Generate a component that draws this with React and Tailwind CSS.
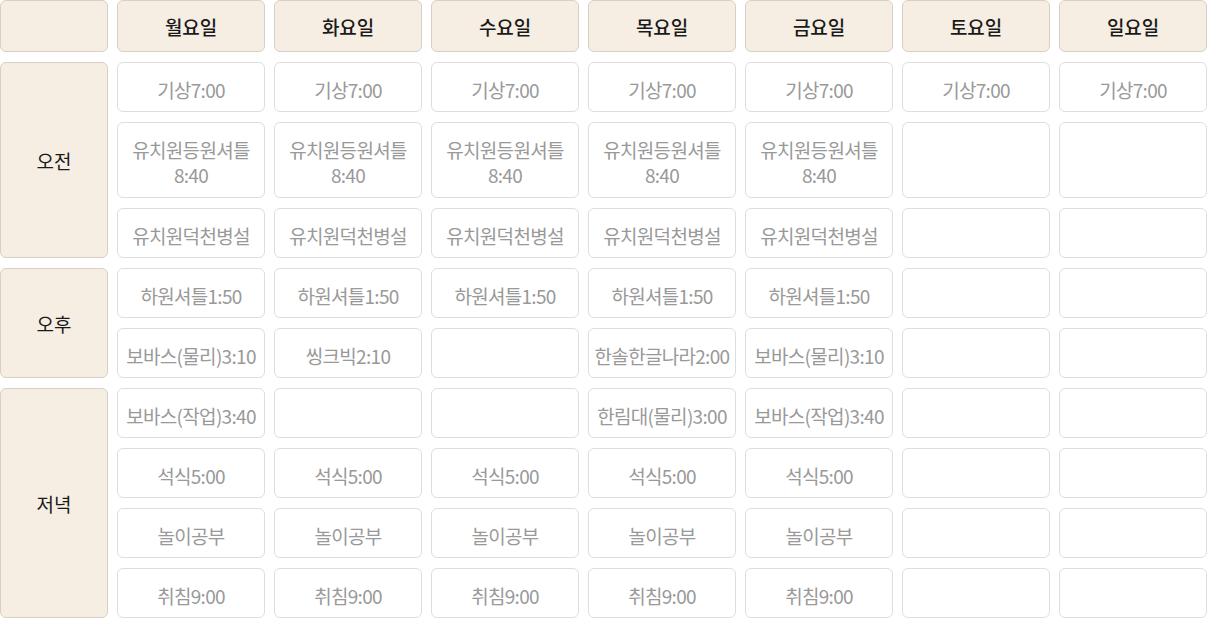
import React from "react";

const days = ["월요일", "화요일", "수요일", "목요일", "금요일", "토요일", "일요일"];

// each row: 7 entries, one per day ("" = empty box)
const rows = [
  ["기상7:00", "기상7:00", "기상7:00", "기상7:00", "기상7:00", "기상7:00", "기상7:00"],
  [
    "유치원등원셔틀\n8:40",
    "유치원등원셔틀\n8:40",
    "유치원등원셔틀\n8:40",
    "유치원등원셔틀\n8:40",
    "유치원등원셔틀\n8:40",
    "",
    "",
  ],
  ["유치원덕천병설", "유치원덕천병설", "유치원덕천병설", "유치원덕천병설", "유치원덕천병설", "", ""],
  ["하원셔틀1:50", "하원셔틀1:50", "하원셔틀1:50", "하원셔틀1:50", "하원셔틀1:50", "", ""],
  ["보바스(물리)3:10", "씽크빅2:10", "", "한솔한글나라2:00", "보바스(물리)3:10", "", ""],
  ["보바스(작업)3:40", "", "", "한림대(물리)3:00", "보바스(작업)3:40", "", ""],
  ["석식5:00", "석식5:00", "석식5:00", "석식5:00", "석식5:00", "", ""],
  ["놀이공부", "놀이공부", "놀이공부", "놀이공부", "놀이공부", "", ""],
  ["취침9:00", "취침9:00", "취침9:00", "취침9:00", "취침9:00", "", ""],
];

const periods = [
  { label: "오전", row: "row-start-2 row-end-5" },
  { label: "오후", row: "row-start-5 row-end-7" },
  { label: "저녁", row: "row-start-7 row-end-11" },
];

const beige = "bg-[#f6eee3] border border-[#d8d0c6] rounded-[6px]";

export default function App() {
  return (
    <div
      className="w-[1207px] h-[618px] bg-white"
      style={{ fontFamily: '"Noto Sans CJK KR", "Noto Sans", sans-serif' }}
    >
      <div className="grid grid-cols-[108px_repeat(7,148px)] grid-rows-[52px_50px_76px_50px_50px_50px_50px_50px_50px_50px] gap-x-[9px] gap-y-[10px]">
        <div className={`${beige} col-start-1 row-start-1`} />
        {days.map((d) => (
          <div
            key={d}
            className={`${beige} row-start-1 flex items-center justify-center pt-[2px] text-[19px] font-medium text-[#1a1a1a] tracking-[-0.2px]`}
          >
            {d}
          </div>
        ))}

        {periods.map((p) => (
          <div
            key={p.label}
            className={`${beige} col-start-1 ${p.row} flex items-center justify-center pt-[2px] text-[19px] text-[#1a1a1a]`}
          >
            {p.label}
          </div>
        ))}

        {rows.map((r, ri) =>
          r.map((txt, ci) => (
            <div
              key={`${ri}-${ci}`}
              className="border border-[#dedede] rounded-[6px] bg-white flex items-center justify-center pt-[4px] text-center whitespace-pre-line text-[19px] leading-[25px] text-[#999999] tracking-[-0.7px]"
            >
              {txt}
            </div>
          ))
        )}
      </div>
    </div>
  );
}
